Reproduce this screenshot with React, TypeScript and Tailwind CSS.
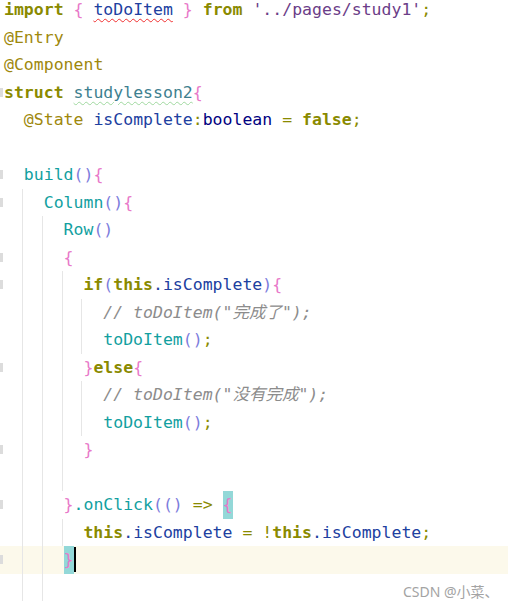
type Tok = [string, string];

type CodeLine = {
  indent: number;
  guides: number;
  marker?: boolean;
  current?: boolean;
  toks: Tok[];
};

// editor palette
const KW = "font-bold text-[#8a8a00]";
const OL = "text-[#8a8a00]";
const AN = "text-[#9e880d]";
const BR = "text-[#e879c9]";
const PA = "text-[#7c7cdc]";
const ID = "text-[#20409f]";
const FN = "text-[#12a0a0]";
const ST = "text-[#6b3d88]";
const TY = "text-[#000080]";
const CM = "italic text-[#8c8c8c]";
const SP = "";
const MATCH = "inline-block align-top bg-[#93d8d8] text-[#e879c9]";

const lines: CodeLine[] = [
  {
    indent: 0,
    guides: 0,
    toks: [
      ["import", KW],
      [" ", SP],
      ["{", BR],
      [" ", SP],
      ["toDoItem", `${ID} underline decoration-wavy decoration-[#f03030] decoration-1 underline-offset-[3px]`],
      [" ", SP],
      ["}", BR],
      [" ", SP],
      ["from", KW],
      [" ", SP],
      ["'../pages/study1'", ST],
      [";", OL],
    ],
  },
  { indent: 0, guides: 0, toks: [["@Entry", AN]] },
  { indent: 0, guides: 0, toks: [["@Component", AN]] },
  {
    indent: 0,
    guides: 0,
    marker: true,
    toks: [
      ["struct", KW],
      [" ", SP],
      ["studylesson2", "text-[#3e7f8f] underline decoration-wavy decoration-[#9fd89f] decoration-1 underline-offset-[3px]"],
      ["{", BR],
    ],
  },
  {
    indent: 1,
    guides: 0,
    toks: [
      ["@State", AN],
      [" ", SP],
      ["isComplete", ID],
      [":", OL],
      ["boolean", TY],
      [" ", SP],
      ["=", OL],
      [" ", SP],
      ["false", KW],
      [";", OL],
    ],
  },
  { indent: 0, guides: 0, toks: [] },
  { indent: 1, guides: 0, marker: true, toks: [["build", FN], ["()", PA], ["{", BR]] },
  { indent: 2, guides: 1, marker: true, toks: [["Column", FN], ["()", PA], ["{", BR]] },
  { indent: 3, guides: 2, toks: [["Row", FN], ["()", PA]] },
  { indent: 3, guides: 2, marker: true, toks: [["{", BR]] },
  {
    indent: 4,
    guides: 3,
    marker: true,
    toks: [
      ["if", KW],
      ["(", PA],
      ["this", KW],
      [".", ID],
      ["isComplete", ID],
      [")", PA],
      ["{", BR],
    ],
  },
  { indent: 5, guides: 4, toks: [['// toDoItem("完成了");', CM]] },
  { indent: 5, guides: 4, toks: [["toDoItem", FN], ["()", PA], [";", OL]] },
  { indent: 4, guides: 3, marker: true, toks: [["}", BR], ["else", KW], ["{", BR]] },
  { indent: 5, guides: 4, toks: [['// toDoItem("没有完成");', CM]] },
  { indent: 5, guides: 4, toks: [["toDoItem", FN], ["()", PA], [";", OL]] },
  { indent: 4, guides: 3, marker: true, toks: [["}", BR]] },
  { indent: 0, guides: 3, toks: [] },
  {
    indent: 3,
    guides: 2,
    marker: true,
    toks: [
      ["}", BR],
      [".onClick", FN],
      ["(", PA],
      ["()", PA],
      [" ", SP],
      ["=>", OL],
      [" ", SP],
      ["{", MATCH],
    ],
  },
  {
    indent: 4,
    guides: 3,
    toks: [
      ["this", KW],
      [".", ID],
      ["isComplete", ID],
      [" = ", OL],
      ["!", OL],
      ["this", KW],
      [".", ID],
      ["isComplete", ID],
      [";", OL],
    ],
  },
  { indent: 3, guides: 2, marker: true, current: true, toks: [["}", MATCH]] },
  { indent: 0, guides: 2, toks: [] },
];

function Line({ line }: { line: CodeLine }) {
  const cols = Math.max(line.indent, line.guides);
  return (
    <div className={`flex h-[27.5px] ${line.current ? "bg-[#fcf9eb]" : ""}`}>
      <div className="flex w-[4px] shrink-0 items-center">
        {line.marker && <div className="h-[9px] w-[3px] bg-[#dcdcdc]" />}
      </div>
      {Array.from({ length: cols }).map((_, i) => (
        <div key={i} className="flex w-[2ch] shrink-0 justify-end pr-[1px]">
          {i < line.guides && <div className="w-px bg-[#e6e6e6]" />}
        </div>
      ))}
      <div className="whitespace-pre leading-[27.5px]">
        {line.toks.map(([text, cls], i) => (
          <span key={i} className={cls}>
            {text}
          </span>
        ))}
        {line.current && <span className="inline-block h-[25px] w-[2px] align-top mt-[1px] bg-black" />}
      </div>
    </div>
  );
}

export default function App() {
  return (
    <div className="relative h-[607px] w-[508px] overflow-hidden bg-white">
      <div className="-mt-[4px] font-['DejaVu_Sans_Mono','Noto_Sans_CJK_SC',monospace] text-[16.5px]">
        {lines.map((line, i) => (
          <Line key={i} line={line} />
        ))}
      </div>

      {/* watermark */}
      <div className="absolute left-[403px] top-[582px] font-['Noto_Sans','Noto_Sans_CJK_SC',sans-serif] text-[14px] leading-[20px] text-[#a3a3a3]">
        CSDN @小菜、
      </div>
    </div>
  );
}
